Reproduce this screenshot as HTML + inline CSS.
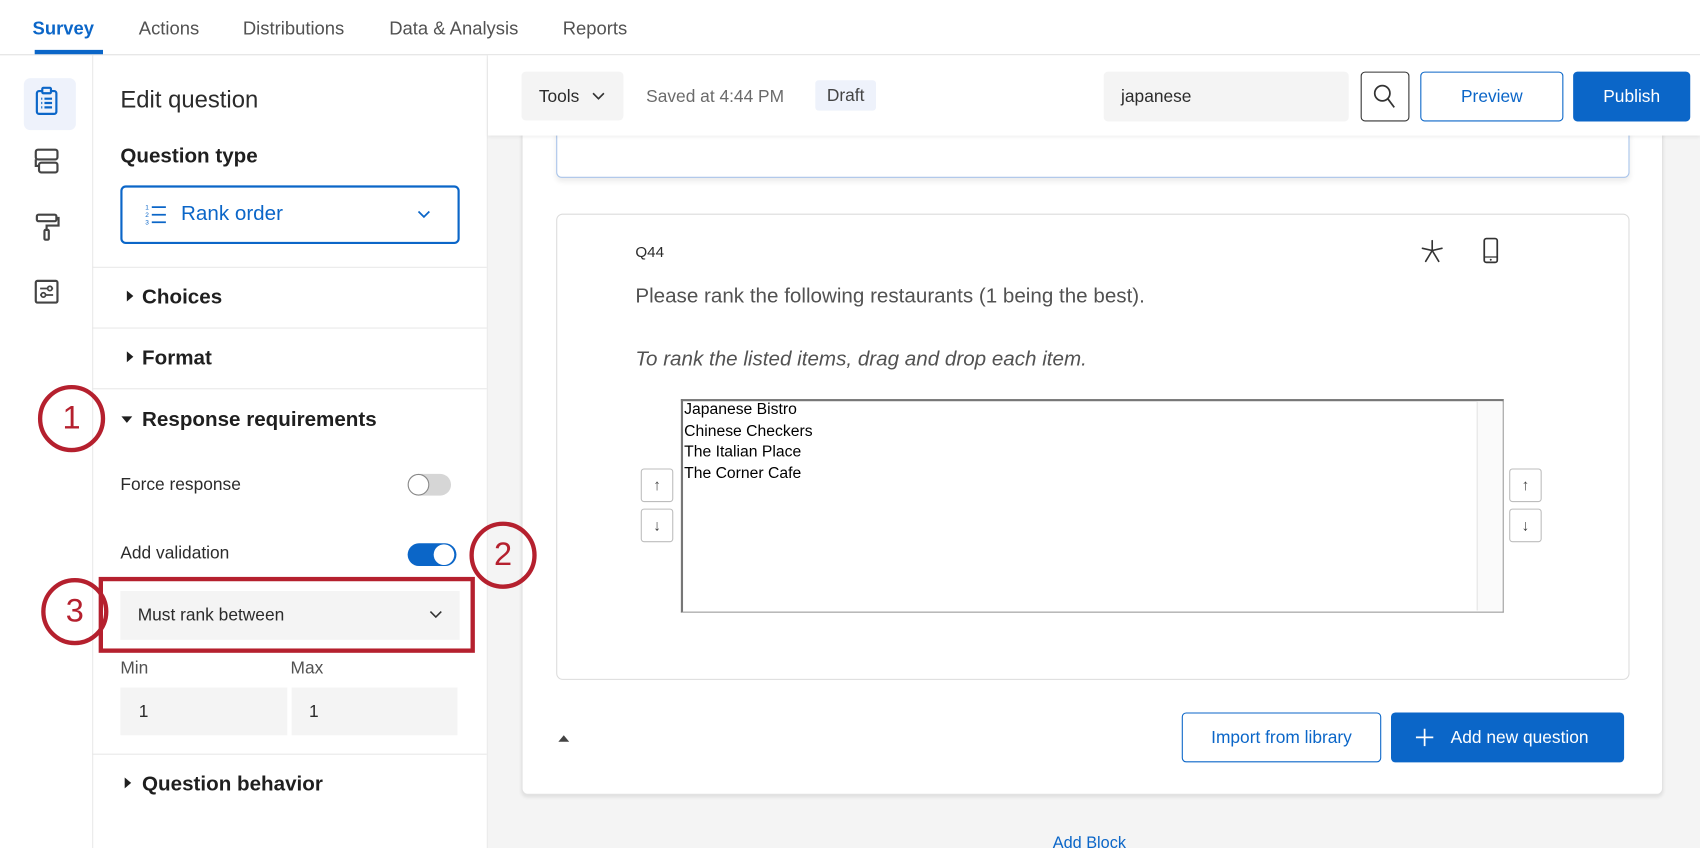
<!DOCTYPE html>
<html><head><meta charset="utf-8"><style>
*{box-sizing:border-box;margin:0;padding:0}
html,body{width:1700px;height:848px;overflow:hidden;background:#fff;font-family:"Liberation Sans",Arial,sans-serif}
#w{position:absolute;left:0;top:0;width:1568px;height:782px;transform:scale(1.08418,1.08440);transform-origin:0 0;background:#fff;overflow:hidden}
.a{position:absolute}
.t{position:absolute;white-space:nowrap}
.nav{font-size:17px;color:#525252;top:17px}
.bold{font-weight:bold;color:#1f1f1f}
.div{position:absolute;left:85px;width:364px;height:1px;background:#e8e8e8}
.tri{position:absolute;width:0;height:0;border-top:5px solid transparent;border-bottom:5px solid transparent;border-left:6px solid #1f1f1f}
.circ{position:absolute;z-index:5;width:62px;height:62px;border:4px solid #b5202e;border-radius:50%;color:#b5202e;font-size:30px;text-align:center;line-height:54px;background:transparent}
.arr{position:absolute;width:30px;height:31px;border:1px solid #bdbdbd;border-radius:3px;background:#fff;font-size:14px;text-align:center;line-height:29px;color:#444}
</style></head><body><div id="w">
<!-- top nav -->
<div class="a" style="left:0;top:50px;width:1568px;height:1px;background:#e0e0e0"></div>
<div class="t nav" style="left:30px;color:#0b66c8;font-weight:bold">Survey</div>
<div class="a" style="left:32px;top:46px;width:63px;height:4px;background:#0b66c8"></div>
<div class="t nav" style="left:128px">Actions</div>
<div class="t nav" style="left:224px">Distributions</div>
<div class="t nav" style="left:359px">Data &amp; Analysis</div>
<div class="t nav" style="left:519px">Reports</div>
<!-- left rail -->
<div class="a" style="left:85px;top:51px;width:1px;height:731px;background:#e8e8e8"></div>
<div class="a" style="left:22px;top:72px;width:48px;height:48px;background:#eef2fb;border-radius:6px"></div>
<svg class="a" style="left:30px;top:78px" width="26" height="36" viewBox="0 0 26 36"><rect x="4" y="6" width="18" height="21" rx="2" fill="none" stroke="#0b66c8" stroke-width="2"/><rect x="9" y="3" width="8" height="5" rx="1" fill="#eef2fb" stroke="#0b66c8" stroke-width="2"/><g stroke="#0b66c8" stroke-width="2"><line x1="8" y1="13" x2="9" y2="13"/><line x1="11" y1="13" x2="18" y2="13"/><line x1="8" y1="17" x2="9" y2="17"/><line x1="11" y1="17" x2="18" y2="17"/><line x1="8" y1="21" x2="9" y2="21"/><line x1="11" y1="21" x2="18" y2="21"/></g></svg>
<svg class="a" style="left:30px;top:136px" width="26" height="26" viewBox="0 0 26 26"><rect x="3" y="2" width="20" height="9" rx="2" fill="none" stroke="#444" stroke-width="2"/><rect x="6" y="14" width="17" height="9" rx="2" fill="none" stroke="#444" stroke-width="2"/><path d="M3 11v6h3" fill="none" stroke="#444" stroke-width="2"/></svg>
<svg class="a" style="left:30px;top:195px" width="26" height="30" viewBox="0 0 26 30"><rect x="4" y="3" width="18" height="6" rx="1.5" fill="none" stroke="#444" stroke-width="2"/><path d="M22 6h2v7H13v4" fill="none" stroke="#444" stroke-width="2"/><rect x="11" y="17" width="4" height="9" rx="1" fill="none" stroke="#444" stroke-width="2"/></svg>
<svg class="a" style="left:30px;top:256px" width="26" height="26" viewBox="0 0 26 26"><rect x="3" y="3" width="20" height="20" rx="1.5" fill="none" stroke="#444" stroke-width="2"/><line x1="7" y1="10" x2="19" y2="10" stroke="#444" stroke-width="1.6"/><line x1="7" y1="16" x2="19" y2="16" stroke="#444" stroke-width="1.6"/><circle cx="16" cy="10" r="2" fill="#fff" stroke="#444" stroke-width="1.6"/><circle cx="10" cy="16" r="2" fill="#fff" stroke="#444" stroke-width="1.6"/></svg>
<!-- edit panel -->
<div class="a" style="left:449px;top:51px;width:1px;height:731px;background:#e8e8e8"></div>
<div class="t" style="left:111px;top:79px;font-size:22px;color:#2b2b2b">Edit question</div>
<div class="t bold" style="left:111px;top:134px;font-size:19px">Question type</div>
<div class="a" style="left:111px;top:171px;width:313px;height:54px;border:2px solid #0b66c8;border-radius:5px"></div>
<svg class="a" style="left:133px;top:186px" width="24" height="24" viewBox="0 0 24 24"><g fill="#0b66c8" font-size="6" font-family="Liberation Sans"><text x="1" y="7">1</text><text x="1" y="14">2</text><text x="1" y="21">3</text></g><g stroke="#0b66c8" stroke-width="1.6"><line x1="7" y1="5" x2="20" y2="5"/><line x1="7" y1="12" x2="20" y2="12"/><line x1="7" y1="19" x2="20" y2="19"/></g></svg>
<div class="t" style="left:167px;top:187px;font-size:19px;color:#0b66c8">Rank order</div>
<svg class="a" style="left:384px;top:193px" width="14" height="10" viewBox="0 0 14 10"><path d="M2 2l5 5 5-5" fill="none" stroke="#0b66c8" stroke-width="1.6"/></svg>
<div class="div" style="top:246px"></div>
<div class="tri" style="left:117px;top:268px"></div>
<div class="t bold" style="left:131px;top:264px;font-size:19px">Choices</div>
<div class="div" style="top:302px"></div>
<div class="tri" style="left:117px;top:324px"></div>
<div class="t bold" style="left:131px;top:320px;font-size:19px">Format</div>
<div class="div" style="top:358px"></div>
<div class="a" style="left:112px;top:384px;width:0;height:0;border-left:5px solid transparent;border-right:5px solid transparent;border-top:6px solid #1f1f1f"></div>
<div class="t bold" style="left:131px;top:377px;font-size:19px">Response requirements</div>
<div class="t" style="left:111px;top:439px;font-size:16px;color:#2b2b2b">Force response</div>
<div class="a" style="left:376px;top:437px;width:40px;height:20px;border-radius:10px;background:#d6d6d6"></div>
<div class="a" style="left:376px;top:437px;width:20px;height:20px;border-radius:50%;background:#fff;border:1.5px solid #888"></div>
<div class="t" style="left:111px;top:502px;font-size:16px;color:#2b2b2b">Add validation</div>
<div class="a" style="left:376px;top:501px;width:45px;height:21px;border-radius:11px;background:#0b66c8"></div>
<div class="a" style="left:400px;top:502px;width:19px;height:19px;border-radius:50%;background:#fff"></div>
<div class="a" style="left:111px;top:545px;width:313px;height:45px;background:#f4f4f4"></div>
<div class="t" style="left:127px;top:559px;font-size:16px;color:#2b2b2b">Must rank between</div>
<svg class="a" style="left:395px;top:562px" width="14" height="10" viewBox="0 0 14 10"><path d="M2 2l5 5 5-5" fill="none" stroke="#333" stroke-width="1.5"/></svg>
<div class="a" style="left:91px;top:532px;width:347px;height:70px;border:4px solid #b5202e"></div>
<div class="t" style="left:111px;top:608px;font-size:16px;color:#525252">Min</div>
<div class="t" style="left:268px;top:608px;font-size:16px;color:#525252">Max</div>
<div class="a" style="left:111px;top:634px;width:154px;height:44px;background:#f4f4f4"></div>
<div class="a" style="left:269px;top:634px;width:153px;height:44px;background:#f4f4f4"></div>
<div class="t" style="left:128px;top:648px;font-size:16px;color:#2b2b2b">1</div>
<div class="t" style="left:285px;top:648px;font-size:16px;color:#2b2b2b">1</div>
<div class="div" style="top:695px"></div>
<div class="tri" style="left:115px;top:717px"></div>
<div class="t bold" style="left:131px;top:713px;font-size:19px">Question behavior</div>
<!-- main -->
<div class="a" style="left:450px;top:51px;width:1118px;height:731px;background:#f4f4f4"></div>
<div class="a" style="left:481px;top:100px;width:1053px;height:633px;background:#fff;border:1px solid #e2e2e2;border-radius:6px;box-shadow:0 2px 3px rgba(0,0,0,.08)"></div>
<div class="a" style="left:513px;top:100px;width:990px;height:64px;background:#fff;border:1.5px solid #a9c4ea;border-radius:5px;box-shadow:0 3px 5px rgba(0,0,0,.08)"></div>
<div class="a" style="left:513px;top:197px;width:990px;height:430px;background:#fff;border:1px solid #dcdcdc;border-radius:6px"></div>
<div class="t" style="left:586px;top:224px;font-size:14px;color:#2b2b2b">Q44</div>
<svg class="a" style="left:1310px;top:220px" width="22" height="24" viewBox="0 0 22 24"><g stroke="#333" stroke-width="1.5" fill="none" stroke-linecap="round"><line x1="11" y1="11" x2="11" y2="2"/><line x1="11" y1="11" x2="2" y2="9"/><line x1="11" y1="11" x2="20" y2="9"/><line x1="11" y1="11" x2="5" y2="21"/><line x1="11" y1="11" x2="17" y2="21"/></g></svg>
<svg class="a" style="left:1366px;top:218px" width="18" height="26" viewBox="0 0 18 26"><rect x="3" y="2" width="12" height="22" rx="2" fill="none" stroke="#333" stroke-width="1.6"/><line x1="3" y1="19" x2="15" y2="19" stroke="#333" stroke-width="1.2"/><circle cx="9" cy="21.5" r="0.9" fill="#333"/></svg>
<div class="t" style="left:586px;top:263px;font-size:19px;color:#525252">Please rank the following restaurants (1 being the best).</div>
<div class="t" style="left:586px;top:321px;font-size:19px;color:#525252;font-style:italic">To rank the listed items, drag and drop each item.</div>
<div class="a" style="left:628px;top:368px;width:759px;height:197px;border:1px solid #999;border-top:2px solid #777;border-left:2px solid #777;background:#fff"></div>
<div class="a" style="left:1362px;top:370px;width:23px;height:193px;background:#fafafa;border-left:1px solid #e4e4e4"></div>
<div class="t" style="left:631px;top:369px;font-size:14.5px;line-height:19.6px;color:#000;white-space:pre">Japanese Bistro
Chinese Checkers
The Italian Place
The Corner Cafe</div>
<div class="arr" style="left:591px;top:432px">↑</div>
<div class="arr" style="left:591px;top:469px">↓</div>
<div class="arr" style="left:1392px;top:432px">↑</div>
<div class="arr" style="left:1392px;top:469px">↓</div>
<div class="a" style="left:515px;top:678px;width:0;height:0;border-left:5px solid transparent;border-right:5px solid transparent;border-bottom:6px solid #444"></div>
<div class="a" style="left:1090px;top:657px;width:184px;height:46px;border:1.5px solid #0b66c8;border-radius:4px;background:#fff;color:#0b66c8;font-size:16px;text-align:center;line-height:46px">Import from library</div>
<div class="a" style="left:1283px;top:657px;width:215px;height:46px;border-radius:4px;background:#0b66c8;color:#fff;font-size:16px;line-height:48px;padding-left:55px">Add new question</div>
<svg class="a" style="left:1305px;top:671px" width="18" height="18" viewBox="0 0 18 18"><path d="M9 1v16M1 9h16" stroke="#fff" stroke-width="1.6"/></svg>
<div class="t" style="left:971px;top:769px;font-size:15px;color:#0b66c8">Add Block</div>
<!-- toolbar -->
<div class="a" style="left:450px;top:51px;width:1118px;height:74px;background:#fff;box-shadow:0 2px 3px rgba(0,0,0,.06)"></div>
<div class="a" style="left:481px;top:66px;width:94px;height:45px;background:#f4f4f4;border-radius:4px"></div>
<div class="t" style="left:497px;top:81px;font-size:16px;color:#2b2b2b">Tools</div>
<svg class="a" style="left:545px;top:84px" width="14" height="10" viewBox="0 0 14 10"><path d="M2 2l5 5 5-5" fill="none" stroke="#333" stroke-width="1.5"/></svg>
<div class="t" style="left:596px;top:81px;font-size:16px;color:#6b6b6b">Saved at 4:44 PM</div>
<div class="a" style="left:752px;top:74px;width:56px;height:28px;background:#eef2fb;border-radius:3px;font-size:16px;color:#444;text-align:center;line-height:30px">Draft</div>
<div class="a" style="left:1018px;top:66px;width:226px;height:46px;background:#f4f4f4;border-radius:4px"></div>
<div class="t" style="left:1034px;top:81px;font-size:16px;color:#2b2b2b">japanese</div>
<div class="a" style="left:1255px;top:66px;width:45px;height:46px;border:1.5px solid #333;border-radius:4px"></div>
<svg class="a" style="left:1265px;top:76px" width="24" height="26" viewBox="0 0 24 26"><circle cx="10" cy="10" r="7" fill="none" stroke="#333" stroke-width="1.6"/><line x1="15" y1="15" x2="21" y2="23" stroke="#333" stroke-width="1.6"/></svg>
<div class="a" style="left:1310px;top:66px;width:132px;height:46px;border:1.5px solid #0b66c8;border-radius:4px;color:#0b66c8;font-size:16px;text-align:center;line-height:46px">Preview</div>
<div class="a" style="left:1451px;top:66px;width:108px;height:46px;background:#0b66c8;border-radius:4px;color:#fff;font-size:16px;text-align:center;line-height:48px">Publish</div>
<!-- annotations -->
<div class="circ" style="left:35px;top:355px">1</div>
<div class="circ" style="left:433px;top:481px">2</div>
<div class="circ" style="left:38px;top:533px">3</div>
</div></body></html>
